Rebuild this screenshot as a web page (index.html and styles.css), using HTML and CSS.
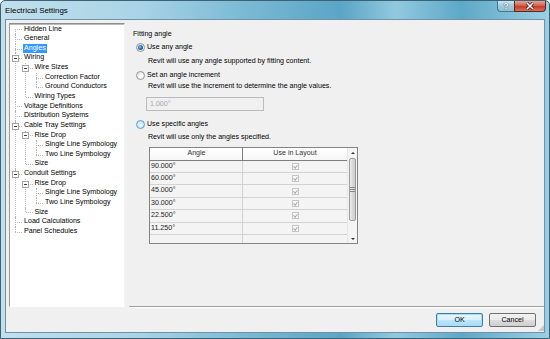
FILE: index.html
```html
<!DOCTYPE html>
<html lang="en">
<head>
    <meta charset="UTF-8">
    <title>Electrical Settings</title>
    <link rel="stylesheet" href="styles.css">
</head>
<body>
    <div class="window">
        <div class="titlebar">
            <span class="title">Electrical Settings</span>
            <div class="caption-btns">
                <span class="cap help">?</span>
                <span class="cap close">
                    <svg width="10" height="8" viewBox="0 0 10 8"><path d="M2 1 L8 7 M8 1 L2 7" stroke="#3a1a14" stroke-width="3"/><path d="M2 1 L8 7 M8 1 L2 7" stroke="#fff" stroke-width="1.6"/></svg>
                </span>
            </div>
        </div>
        <div class="client">
            <div class="main">
                <div class="tree-panel">
                    <ul class="tree">
                        <li><span class="lbl">Hidden Line</span></li>
                        <li><span class="lbl">General</span></li>
                        <li class="sel"><span class="lbl"><span class="txt">Angles</span></span></li>
                        <li><span class="lbl"><span class="box"></span>Wiring</span>
                            <ul>
                                <li><span class="lbl"><span class="box"></span>Wire Sizes</span>
                                    <ul>
                                        <li><span class="lbl">Correction Factor</span></li>
                                        <li><span class="lbl">Ground Conductors</span></li>
                                    </ul>
                                </li>
                                <li><span class="lbl">Wiring Types</span></li>
                            </ul>
                        </li>
                        <li><span class="lbl">Voltage Definitions</span></li>
                        <li><span class="lbl">Distribution Systems</span></li>
                        <li><span class="lbl"><span class="box"></span>Cable Tray Settings</span>
                            <ul>
                                <li><span class="lbl"><span class="box"></span>Rise Drop</span>
                                    <ul>
                                        <li><span class="lbl">Single Line Symbology</span></li>
                                        <li><span class="lbl">Two Line Symbology</span></li>
                                    </ul>
                                </li>
                                <li><span class="lbl">Size</span></li>
                            </ul>
                        </li>
                        <li><span class="lbl"><span class="box"></span>Conduit Settings</span>
                            <ul>
                                <li><span class="lbl"><span class="box"></span>Rise Drop</span>
                                    <ul>
                                        <li><span class="lbl">Single Line Symbology</span></li>
                                        <li><span class="lbl">Two Line Symbology</span></li>
                                    </ul>
                                </li>
                                <li><span class="lbl">Size</span></li>
                            </ul>
                        </li>
                        <li><span class="lbl">Load Calculations</span></li>
                        <li><span class="lbl">Panel Schedules</span></li>
                    </ul>
                </div>

                <div class="settings">
                    <div class="section-title">Fitting angle</div>

                    <label class="option first"><span class="radio checked"></span>Use any angle</label>
                    <div class="desc d1">Revit will use any angle supported by fitting content.</div>

                    <label class="option"><span class="radio"></span>Set an angle increment</label>
                    <div class="desc d2">Revit will use the increment to determine the angle values.</div>
                    <div class="inc-input">1.000°</div>

                    <label class="option o3"><span class="radio hover"></span>Use specific angles</label>
                    <div class="desc d3">Revit will use only the angles specified.</div>

                    <div class="grid-box">
                        <div class="grid">
                            <div class="row head"><div class="c1">Angle</div><div class="c2">Use in Layout</div></div>
                            <div class="row"><div class="c1">90.000°</div><div class="c2"><span class="chk"></span></div></div>
                            <div class="row"><div class="c1">60.000°</div><div class="c2"><span class="chk"></span></div></div>
                            <div class="row"><div class="c1">45.000°</div><div class="c2"><span class="chk"></span></div></div>
                            <div class="row"><div class="c1">30.000°</div><div class="c2"><span class="chk"></span></div></div>
                            <div class="row"><div class="c1">22.500°</div><div class="c2"><span class="chk"></span></div></div>
                            <div class="row"><div class="c1">11.250°</div><div class="c2"><span class="chk"></span></div></div>
                            <div class="row"><div class="c1"></div><div class="c2"></div></div>
                        </div>
                        <div class="vscroll">
                            <div class="arrow up"></div>
                            <div class="track">
                                <div class="thumb"><span></span><span></span><span></span></div>
                            </div>
                            <div class="arrow down"></div>
                        </div>
                    </div>
                </div>
            </div>

            <div class="footer">
                <button class="btn default">OK</button>
                <button class="btn">Cancel</button>
                <span class="grip"></span>
            </div>
        </div>
    </div>
</body>
</html>
```

FILE: styles.css
```css
body {
    margin: 0;
    background: #fff;
    font-family: 'Liberation Sans', Arial, sans-serif;
    font-size: 7.1px;
    color: #000;
}

.window {
    width: 550px;
    height: 339px;
    box-sizing: border-box;
    border: 1px solid #3d6276;
    border-radius: 5px 5px 0 0;
    background: linear-gradient(90deg, #c2dfec 0%, #a9d4e6 25%, #79b9d4 45%, #5aa5c6 62%, #92c9df 72%, #5ea8c8 84%, #9bd0e3 100%);
    display: flex;
    flex-direction: column;
}

/* title bar */
.titlebar {
    height: 18px;
    display: flex;
    align-items: flex-start;
    padding-left: 4px;
}

.title {
    font-size: 7.9px;
    line-height: 19px;
    color: #000;
}

.caption-btns {
    margin-left: auto;
    margin-right: 3px;
    display: flex;
}

.cap {
    height: 11px;
    box-sizing: border-box;
    border: 1px solid #4d7489;
    border-top: none;
    display: flex;
    align-items: center;
    justify-content: center;
}

.help {
    width: 17px;
    border-right: none;
    border-radius: 0 0 0 4px;
    background: linear-gradient(#cde6f0, #9fcadd 50%, #8fc0d6);
    color: #fff;
    font-size: 9px;
    font-weight: bold;
    text-shadow: 0 0 1px #2c4f63, 0 0 1px #2c4f63;
}

.close {
    width: 32px;
    border-color: #5a2a22;
    border-radius: 0 0 4px 0;
    background: linear-gradient(#e8a394, #d4624f 45%, #c43e2a 55%, #d8705a);
}

/* client area */
.client {
    flex: 1;
    margin: 0 4px 5px;
    border: 1px solid #6e93a8;
    background: #f0f0f0;
    display: flex;
    flex-direction: column;
}

.main {
    display: flex;
    gap: 4px;
    padding: 3px 0 0 3px;
    height: 284px;
}

.tree-panel {
    width: 116px;
    box-sizing: border-box;
    background: #fff;
    border: 1px solid;
    border-color: #8e8e8e #f4f4f4 #fff #9a9a9a;
    box-shadow: inset 0 1px 0 #b9b9b9;
    padding-top: 0.5px;
    overflow: hidden;
}

/* tree view */
.tree,
.tree ul {
    list-style: none;
    margin: 0;
    padding: 0;
}

.tree ul {
    padding-left: 10.5px;
}

.tree li {
    position: relative;
}

.tree li::before {
    content: "";
    position: absolute;
    left: 4.5px;
    top: 0;
    bottom: 0;
    border-left: 1px dotted #b4b4b4;
}

.tree > li:first-child::before {
    top: 4.8px;
}

.tree li:last-child::before {
    bottom: auto;
    height: 4.8px;
}

.lbl {
    display: block;
    position: relative;
    height: 9.65px;
    line-height: 9.65px;
    padding-left: 14px;
    white-space: nowrap;
    color: #000;
}

.lbl::before {
    content: "";
    position: absolute;
    left: 5px;
    top: 4.8px;
    width: 7px;
    border-top: 1px dotted #b4b4b4;
}

.box {
    position: absolute;
    left: 1.5px;
    top: 1.8px;
    width: 5px;
    height: 5px;
    background: #fff;
    border: 1px solid #a4a4a4;
    z-index: 1;
}

.box::after {
    content: "";
    position: absolute;
    left: 1px;
    top: 2px;
    width: 3px;
    height: 1px;
    background: #3c3c3c;
}

.sel .txt {
    display: inline-block;
    height: 9.6px;
    margin-left: -1px;
    padding: 0 1px;
    background: #3399ff;
    color: #fff;
}

/* right side settings */
.settings {
    flex: 1;
    box-sizing: border-box;
    border-bottom: 1px solid #a0a0a0;
    box-shadow: 0 1px 0 #fff;
    padding-left: 4px;
}

.section-title {
    margin-top: 6px;
    line-height: 10px;
    height: 10px;
}

.option {
    display: flex;
    align-items: center;
    height: 10px;
    line-height: 10px;
    margin-top: 4px;
    margin-left: 3px;
}

.option.first {
    margin-top: 3px;
}

.option.o3 {
    margin-top: 8px;
}

.radio {
    width: 9px;
    height: 9px;
    box-sizing: border-box;
    border-radius: 50%;
    border: 1px solid #939393;
    background: radial-gradient(circle at 60% 65%, #fdfdfd 20%, #dcdcdc 90%);
    margin-right: 2px;
    display: flex;
    align-items: center;
    justify-content: center;
}

.radio.checked::after {
    content: "";
    width: 5px;
    height: 5px;
    border-radius: 50%;
    background: radial-gradient(circle at 40% 40%, #8dd0f5 0%, #1c6fb8 45%, #0b3f7a 100%);
}

.radio.hover {
    border-color: #5b9fcf;
    background: radial-gradient(circle at 50% 60%, #e8f6fd 10%, #b4ddf5 90%);
}

.desc {
    height: 10px;
    line-height: 10px;
    margin-left: 15px;
    margin-top: 4px;
}

.desc.d2 {
    margin-top: 1px;
}

.desc.d3 {
    margin-top: 3px;
}

.inc-input {
    width: 118px;
    height: 14px;
    box-sizing: border-box;
    margin: 6px 0 0 13px;
    border: 1px solid #b8bcbf;
    background: #f0f0f0;
    color: #a8a8a8;
    line-height: 12px;
    padding-left: 3px;
}

/* angle grid */
.grid-box {
    width: 209px;
    height: 97px;
    box-sizing: border-box;
    margin: 5px 0 0 16px;
    border: 1px solid #848484;
    display: flex;
    overflow: hidden;
    background: #f4f4f4;
}

.grid {
    width: 198px;
}

.row {
    display: grid;
    grid-template-columns: 93px 1fr;
    height: 12.4px;
    box-sizing: border-box;
    border-bottom: 1px solid #d3d3d3;
    line-height: 11.4px;
    color: #222;
}

.row .c1 {
    padding-left: 1px;
    border-right: 1px solid #d3d3d3;
}

.row .c2 {
    display: flex;
    align-items: center;
    justify-content: center;
}

.row.head {
    height: 12.6px;
    background: linear-gradient(#ffffff, #f7f7f7);
    border-bottom: 1px solid #7d7d7d;
    text-align: center;
    color: #333;
}

.row.head .c1 {
    border-right: 1px solid #7d7d7d;
}

.chk {
    width: 7px;
    height: 7px;
    box-sizing: border-box;
    border: 1px solid #c4c4c4;
    background: #f7f7f7;
    position: relative;
}

.chk::after {
    content: "";
    position: absolute;
    left: 1.5px;
    top: 0;
    width: 1.5px;
    height: 3px;
    border: solid #a8a8a8;
    border-width: 0 1px 1px 0;
    transform: rotate(40deg);
}

.vscroll {
    flex: 1;
    display: flex;
    flex-direction: column;
    background: #f4f4f4;
    border-left: 1px solid #e6e6e6;
}

.arrow {
    height: 9px;
    display: flex;
    align-items: center;
    justify-content: center;
}

.arrow::after {
    content: "";
    border-left: 2px solid transparent;
    border-right: 2px solid transparent;
}

.arrow.up::after {
    border-bottom: 2px solid #333;
}

.arrow.down::after {
    border-top: 2px solid #333;
}

.track {
    flex: 1;
    padding: 1px 0 0;
}

.thumb {
    height: 63px;
    margin: 0 1px;
    box-sizing: border-box;
    border: 1px solid #9b9b9b;
    border-radius: 2px;
    background: linear-gradient(90deg, #ededed, #dadada 50%, #cdcdcd);
    display: flex;
    flex-direction: column;
    align-items: center;
    justify-content: center;
    gap: 1px;
}

.thumb span {
    width: 5px;
    height: 1px;
    background: #8a8a8a;
}

/* bottom buttons */
.footer {
    display: flex;
    justify-content: flex-end;
    align-items: flex-start;
    gap: 6px;
    padding: 6px 0 0;
    flex: 1;
}

.btn {
    width: 47px;
    height: 14px;
    padding: 0;
    border: 1px solid #707070;
    border-radius: 2px;
    background: linear-gradient(#f2f2f2, #ebebeb 50%, #dddddd 51%, #cfcfcf);
    font-family: 'Liberation Sans', Arial, sans-serif;
    font-size: 7.1px;
    color: #000;
}

.btn.default {
    border-color: #3c7fb1;
    box-shadow: inset 0 0 0 1px #a6dcf6;
    background: linear-gradient(#eaf6fd, #d9f0fc 50%, #bee6fd 51%, #a7d9f5);
}

.grip {
    width: 6px;
    height: 6px;
    align-self: flex-end;
    margin-bottom: 1px;
    margin-left: -4px;
    background:
        radial-gradient(circle, #9a9a9a 0.6px, transparent 0.8px) 0 0 / 2px 2px;
    clip-path: polygon(100% 0, 100% 100%, 0 100%);
}
```
